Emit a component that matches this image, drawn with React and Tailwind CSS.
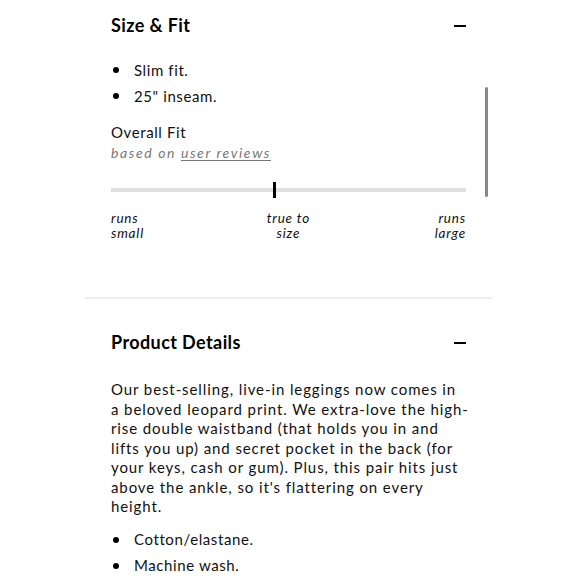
function Bullet({ children }) {
  return (
    <li className="flex items-center h-[26px]">
      <span className="w-[6px] h-[6px] rounded-full bg-black ml-[2px] mr-[15px]" />
      <span>{children}</span>
    </li>
  )
}

function SectionHeader({ title }) {
  return (
    <div className="flex items-center justify-between">
      <h2 className="text-[18px] font-bold text-black tracking-[0.4px]">{title}</h2>
      <span className="w-[12px] h-[2px] bg-black" />
    </div>
  )
}

export default function App() {
  return (
    <div className="w-[580px] h-[580px] bg-white overflow-hidden font-['Lato',sans-serif] text-[15px] tracking-[0.6px] text-[#111]">
      <div className="w-[407px] ml-[85px]">
        {/* Size & Fit */}
        <div className="relative px-[26px] pt-[12px] pb-[56px]">
          <SectionHeader title="Size & Fit" />
          <ul className="mt-[18px]">
            <Bullet>Slim fit.</Bullet>
            <Bullet>25" inseam.</Bullet>
          </ul>
          <div className="mt-[13px]">
            <p className="leading-[20px]">Overall Fit</p>
            <p className="text-[14px] italic text-[#777] tracking-[1.6px] leading-[22px]">
              based on <span className="underline underline-offset-2">user reviews</span>
            </p>
          </div>
          <div className="relative mt-[18px] h-[16px] flex items-center">
            <div className="w-full h-[4px] bg-[#e0e0e0]" />
            <div className="absolute left-[162px] top-0 w-[3px] h-[16px] bg-black" />
          </div>
          <div className="flex justify-between mt-[13px] text-[13.5px] italic leading-[15px] tracking-[0.8px]">
            <span>runs<br />small</span>
            <span className="text-center mr-[2px]">true to<br />size</span>
            <span className="text-right">runs<br />large</span>
          </div>
          <div className="absolute right-[4px] top-[87px] w-[3px] h-[110px] rounded bg-[#888]" />
        </div>

        <div className="h-[2px] bg-[#ececec]" />

        {/* Product Details */}
        <div className="px-[26px] pt-[30px]">
          <SectionHeader title="Product Details" />
          <p className="mt-[24px] leading-[19.5px] tracking-[0.9px] whitespace-nowrap">
            Our best-selling, live-in leggings now comes in<br />
            a beloved leopard print. We extra-love the high-<br />
            rise double waistband (that holds you in and<br />
            lifts you up) and secret pocket in the back (for<br />
            your keys, cash or gum). Plus, this pair hits just<br />
            above the ankle, so it's flattering on every<br />
            height.
          </p>
          <ul className="mt-[10px]">
            <Bullet>Cotton/elastane.</Bullet>
            <Bullet>Machine wash.</Bullet>
          </ul>
        </div>
      </div>
    </div>
  )
}
